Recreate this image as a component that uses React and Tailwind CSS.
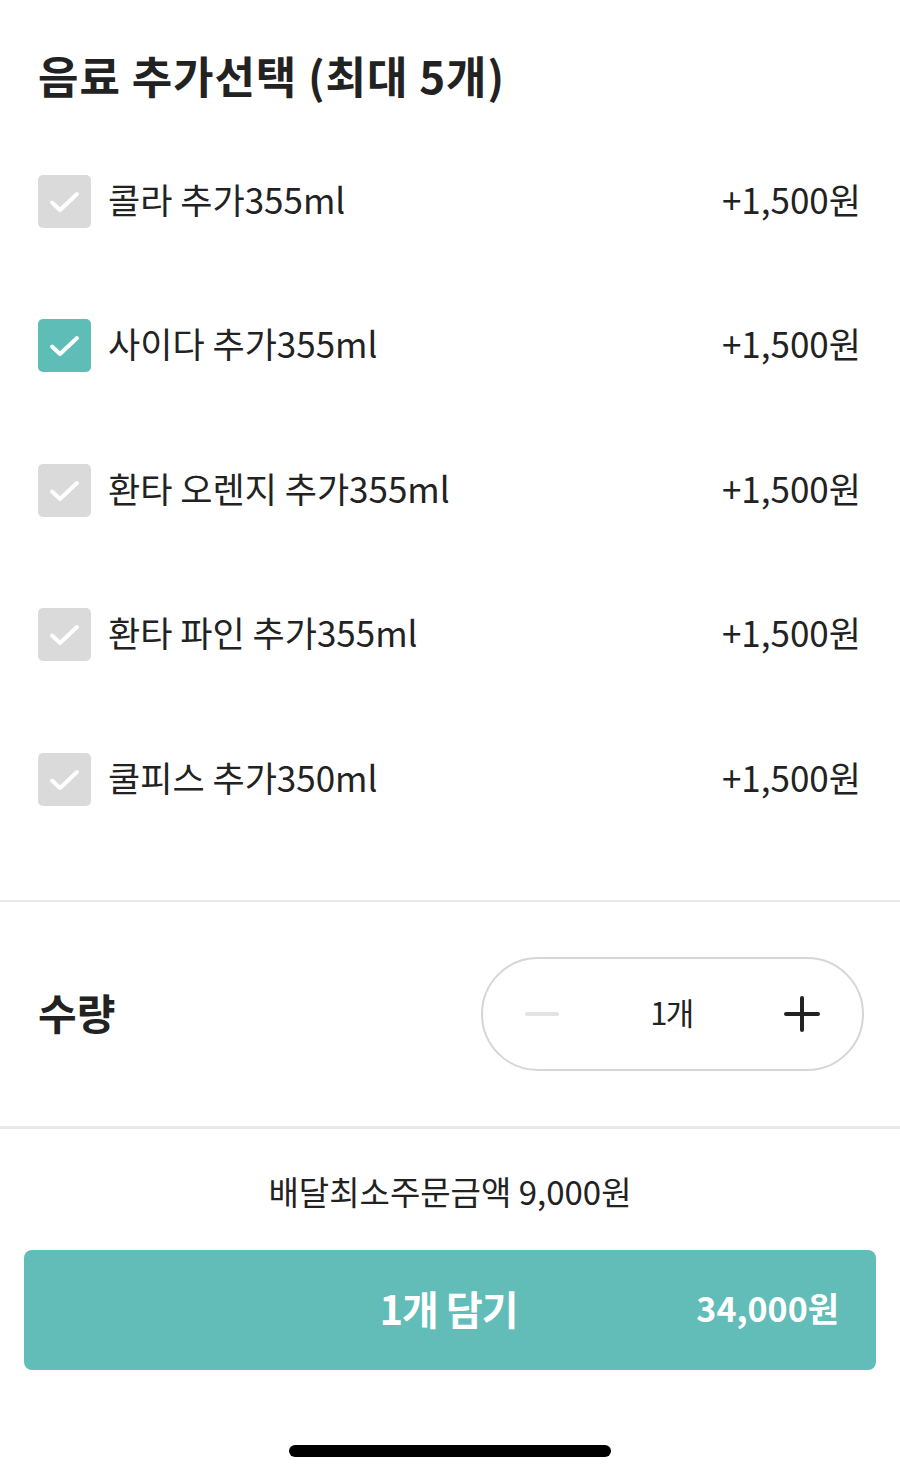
const options = [
  { name: '콜라 추가355ml', price: '+1,500원', checked: false },
  { name: '사이다 추가355ml', price: '+1,500원', checked: true },
  { name: '환타 오렌지 추가355ml', price: '+1,500원', checked: false },
  { name: '환타 파인 추가355ml', price: '+1,500원', checked: false },
  { name: '쿨피스 추가350ml', price: '+1,500원', checked: false },
];

function CheckBox({ checked }) {
  return (
    <span
      className={`flex h-[53px] w-[53px] shrink-0 items-center justify-center rounded-[5px] ${
        checked ? 'bg-[#5fbdb8]' : 'bg-[#dadada]'
      }`}
    >
      <svg width="53" height="53" viewBox="0 0 53 53" fill="none">
        <path d="M14 27.5l8 7.5L39 19" stroke="white" strokeWidth="4" strokeLinecap="round" strokeLinejoin="round" />
      </svg>
    </span>
  );
}

export default function App() {
  return (
    <div
      className="flex h-[1476px] w-[900px] flex-col bg-white text-[#222]"
      style={{ fontFamily: '"Noto Sans CJK KR", "Noto Sans", sans-serif' }}
    >
      <div className="px-[38px] pt-[46px]">
        <h1 className="text-[44px] font-bold leading-[58px] tracking-[0.9px]">음료 추가선택 (최대 5개)</h1>
      </div>

      <ul className="mt-[25px] pb-[48px]">
        {options.map((o) => (
          <li key={o.name} className="flex h-[144.5px] items-center pl-[38px] pr-[39px]">
            <CheckBox checked={o.checked} />
            <span className="mb-[6px] ml-[17px] flex-1 text-[35px] leading-none">{o.name}</span>
            <span className="mb-[6px] text-[35px] leading-none">{o.price}</span>
          </li>
        ))}
      </ul>

      <div className="h-[2px] bg-[#e8e8e8]" />

      <div className="flex items-center justify-between py-[55px] pl-[38px] pr-[36px]">
        <span className="mb-[4px] text-[42px] font-bold leading-none">수량</span>
        <div className="flex h-[114px] w-[383px] items-center justify-between rounded-full border-2 border-[#d6d6d6] px-[42px]">
          <span className="h-[4px] w-[34px] rounded-full bg-[#e3e3e3]" />
          <span className="mb-[4px] text-[31px] leading-none tracking-[-1.5px]">1개</span>
          <svg width="36" height="36" viewBox="0 0 36 36">
            <path d="M18 2v32M2 18h32" stroke="#222" strokeWidth="4" strokeLinecap="round" />
          </svg>
        </div>
      </div>

      <div className="h-[3px] bg-[#e8e8e8]" />

      <p className="mt-[42px] text-center text-[33px] leading-[40px]">배달최소주문금액 9,000원</p>

      <div className="mx-[24px] mt-[39px] flex h-[120px] items-center rounded-[8px] bg-[#62bdb8] pr-[37px] text-white">
        <span className="mb-[4px] flex-1 pl-[204px] text-center text-[40px] font-bold leading-none tracking-[-1px]">1개 담기</span>
        <span className="mb-[4px] w-[170px] text-right text-[34px] font-bold leading-none">34,000원</span>
      </div>

      <div className="mt-auto mb-[19px] flex justify-center">
        <span className="h-[12px] w-[322px] rounded-full bg-black" />
      </div>
    </div>
  );
}
